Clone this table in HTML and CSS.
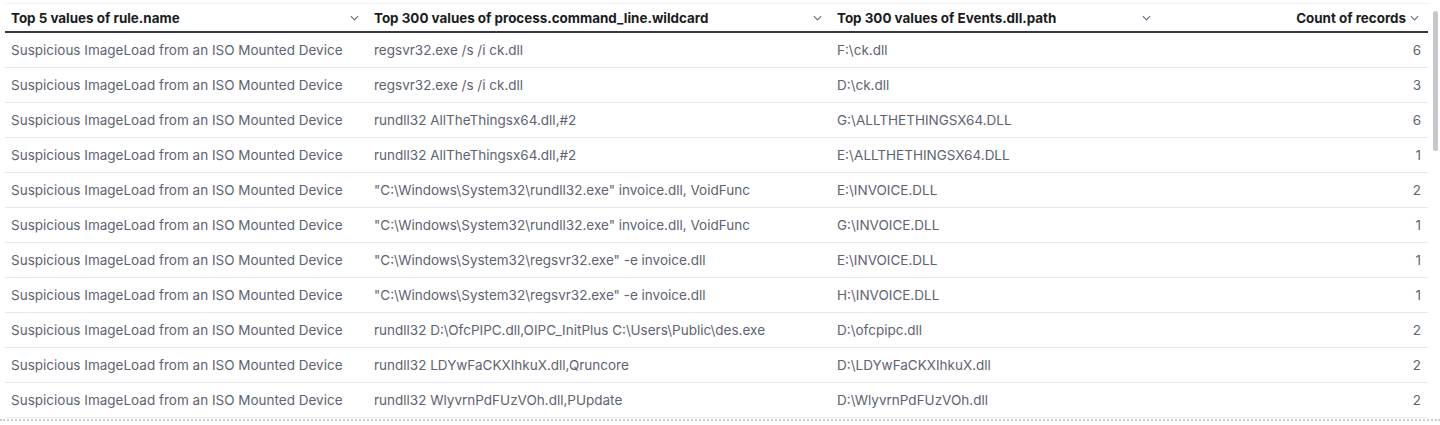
FILE: index.html
```html
<!DOCTYPE html>
<html>
<head>
<meta charset="utf-8">
<link rel="stylesheet" href="styles.css">
</head>
<body>
<div class="panel">
  <div class="viewport">
    <div class="table">
      <div class="row head">
        <div class="cell"><span class="title">Top 5 values of rule.name</span><svg class="chev" viewBox="0 0 10 6"><path d="M1 1 L5 5 L9 1"/></svg></div>
        <div class="cell"><span class="title">Top 300 values of process.command_line.wildcard</span><svg class="chev" viewBox="0 0 10 6"><path d="M1 1 L5 5 L9 1"/></svg></div>
        <div class="cell"><span class="title">Top 300 values of Events.dll.path</span><svg class="chev" viewBox="0 0 10 6"><path d="M1 1 L5 5 L9 1"/></svg></div>
        <div class="cell num"><span class="title">Count of records</span><svg class="chev" viewBox="0 0 10 6"><path d="M1 1 L5 5 L9 1"/></svg></div>
      </div>
      <div class="row"><div class="cell">Suspicious ImageLoad from an ISO Mounted Device</div><div class="cell">regsvr32.exe /s /i ck.dll</div><div class="cell">F:\ck.dll</div><div class="cell num">6</div></div>
      <div class="row"><div class="cell">Suspicious ImageLoad from an ISO Mounted Device</div><div class="cell">regsvr32.exe /s /i ck.dll</div><div class="cell">D:\ck.dll</div><div class="cell num">3</div></div>
      <div class="row"><div class="cell">Suspicious ImageLoad from an ISO Mounted Device</div><div class="cell">rundll32 AllTheThingsx64.dll,#2</div><div class="cell">G:\ALLTHETHINGSX64.DLL</div><div class="cell num">6</div></div>
      <div class="row"><div class="cell">Suspicious ImageLoad from an ISO Mounted Device</div><div class="cell">rundll32 AllTheThingsx64.dll,#2</div><div class="cell">E:\ALLTHETHINGSX64.DLL</div><div class="cell num">1</div></div>
      <div class="row"><div class="cell">Suspicious ImageLoad from an ISO Mounted Device</div><div class="cell">"C:\Windows\System32\rundll32.exe" invoice.dll, VoidFunc</div><div class="cell">E:\INVOICE.DLL</div><div class="cell num">2</div></div>
      <div class="row"><div class="cell">Suspicious ImageLoad from an ISO Mounted Device</div><div class="cell">"C:\Windows\System32\rundll32.exe" invoice.dll, VoidFunc</div><div class="cell">G:\INVOICE.DLL</div><div class="cell num">1</div></div>
      <div class="row"><div class="cell">Suspicious ImageLoad from an ISO Mounted Device</div><div class="cell">"C:\Windows\System32\regsvr32.exe" -e invoice.dll</div><div class="cell">E:\INVOICE.DLL</div><div class="cell num">1</div></div>
      <div class="row"><div class="cell">Suspicious ImageLoad from an ISO Mounted Device</div><div class="cell">"C:\Windows\System32\regsvr32.exe" -e invoice.dll</div><div class="cell">H:\INVOICE.DLL</div><div class="cell num">1</div></div>
      <div class="row"><div class="cell">Suspicious ImageLoad from an ISO Mounted Device</div><div class="cell">rundll32 D:\OfcPIPC.dll,OIPC_InitPlus C:\Users\Public\des.exe</div><div class="cell">D:\ofcpipc.dll</div><div class="cell num">2</div></div>
      <div class="row"><div class="cell">Suspicious ImageLoad from an ISO Mounted Device</div><div class="cell">rundll32 LDYwFaCKXIhkuX.dll,Qruncore</div><div class="cell">D:\LDYwFaCKXIhkuX.dll</div><div class="cell num">2</div></div>
      <div class="row"><div class="cell">Suspicious ImageLoad from an ISO Mounted Device</div><div class="cell">rundll32 WlyvrnPdFUzVOh.dll,PUpdate</div><div class="cell">D:\WlyvrnPdFUzVOh.dll</div><div class="cell num">2</div></div>
    </div>
    <div class="gutter"><div class="thumb"></div></div>
  </div>
</div>
</body>
</html>
```
FILE: styles.css
```css
html, body {
  margin: 0;
  padding: 0;
  background: #ffffff;
}
body {
  font-family: Inter, "Noto Sans", sans-serif;
  font-size: 13.5px;
  color: #5e6370;
}
.panel {
  padding-top: 3px;
  border-bottom: 2px dotted #c9ced6;
  width: 1440px;
}
.viewport {
  display: flex;
  height: 416px;
  overflow: hidden;
}
.table {
  margin-left: 5px;
  width: 1423px;
  flex: none;
  border-top: 1px solid #eef0f3;
}
.row {
  display: grid;
  grid-template-columns: 363px 463px 329px 268px;
  height: 35px;
  border-bottom: 1px solid #e6e9ee;
  box-sizing: border-box;
  align-items: center;
}
.row.head {
  height: 29px;
  border-bottom: 2px solid #343741;
  color: #1a1c21;
  font-weight: 700;
  font-size: 13.4px;
}
.cell {
  padding: 0 7px 0 6px;
  white-space: nowrap;
  overflow: hidden;
  display: flex;
  align-items: center;
}
.head .cell {
  justify-content: space-between;
}
.head .cell.num {
  justify-content: flex-end;
  gap: 4px;
}
.cell.num {
  justify-content: flex-end;
}
.chev {
  width: 9px;
  height: 6px;
  fill: none;
  stroke: #69707d;
  stroke-width: 1.3;
  flex: none;
  margin-right: 2px;
}
.gutter {
  flex: 1;
  position: relative;
}
.thumb {
  position: absolute;
  left: 5px;
  top: 8px;
  width: 5px;
  height: 140px;
  background: #c4c7cc;
  border-radius: 3px;
}
```
